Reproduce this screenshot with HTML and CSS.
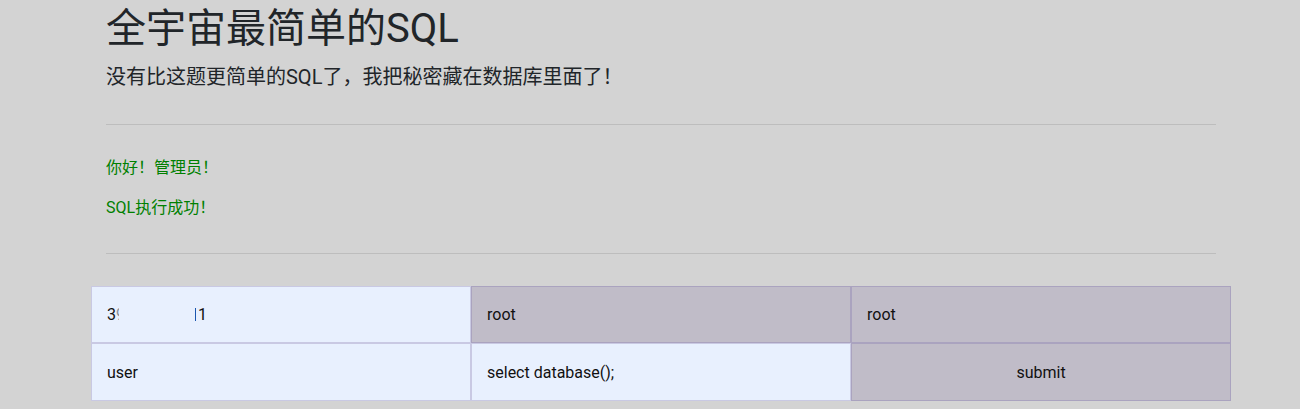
FILE: index.html
```html
<!DOCTYPE html>
<html lang="zh">
<head>
<meta charset="utf-8">
<title>全宇宙最简单的SQL</title>
<link rel="stylesheet" href="styles.css">
</head>
<body>
<div class="container">
  <h1 class="title">全宇宙最简单的SQL</h1>
  <h5 class="subtitle">没有比这题更简单的SQL了，我把秘密藏在数据库里面了！</h5>
  <hr class="rule rule-top">
  <p class="msg">你好！管理员！</p>
  <p class="msg msg-last">SQL执行成功！</p>
  <hr class="rule rule-bottom">
  <form class="grid">
    <div class="cell auto"><span>3</span><span class="clip">9</span><span class="gap"></span><span class="bar"></span><span>1</span></div>
    <div class="cell dark">root</div>
    <div class="cell dark">root</div>
    <div class="cell auto">user</div>
    <div class="cell auto">select database();</div>
    <div class="cell dark center">submit</div>
  </form>
</div>
</body>
</html>
```
FILE: styles.css
```css
html, body {
  margin: 0;
  padding: 0;
  background: #d3d3d3;
}
body {
  font-family: Roboto, "Noto Sans CJK SC", sans-serif;
  color: #212529;
}
.container {
  width: 1110px;
  margin-left: 91px;
  padding: 5px 15px 0;
}
.title {
  margin: 0 0 12px;
  font-size: 40px;
  line-height: 48px;
  font-weight: 400;
}
.subtitle {
  margin: 0;
  font-size: 20px;
  line-height: 24px;
  font-weight: 400;
}
.rule {
  border: 0;
  border-top: 1px solid rgba(0, 0, 0, 0.1);
  margin: 0;
}
.rule-top {
  margin: 35px 0 31px;
}
.rule-bottom {
  margin: 0 0 32px;
}
.msg {
  margin: 0 0 16px;
  font-size: 16px;
  line-height: 24px;
  color: #008000;
}
.msg-last {
  margin-bottom: 33px;
}
.grid {
  display: grid;
  grid-template-columns: repeat(3, 380px);
  grid-template-rows: 57px 58px;
  margin: 0 -15px;
}
.cell {
  box-sizing: border-box;
  padding: 0 15px;
  display: flex;
  align-items: center;
  font-size: 16px;
  color: #111;
  border: 1px solid #c9c9e3;
  background: #e8f0fe;
}
.dark {
  background: #c0bcc8;
  border-color: #aaa3bf;
}
.center {
  justify-content: center;
}
.clip {
  display: inline-block;
  width: 3px;
  overflow: hidden;
  color: #8a8f99;
}
.gap {
  display: inline-block;
  width: 76px;
}
.bar {
  display: inline-block;
  width: 1px;
  height: 13px;
  background: #1a56b0;
  margin-right: 2px;
}
```
